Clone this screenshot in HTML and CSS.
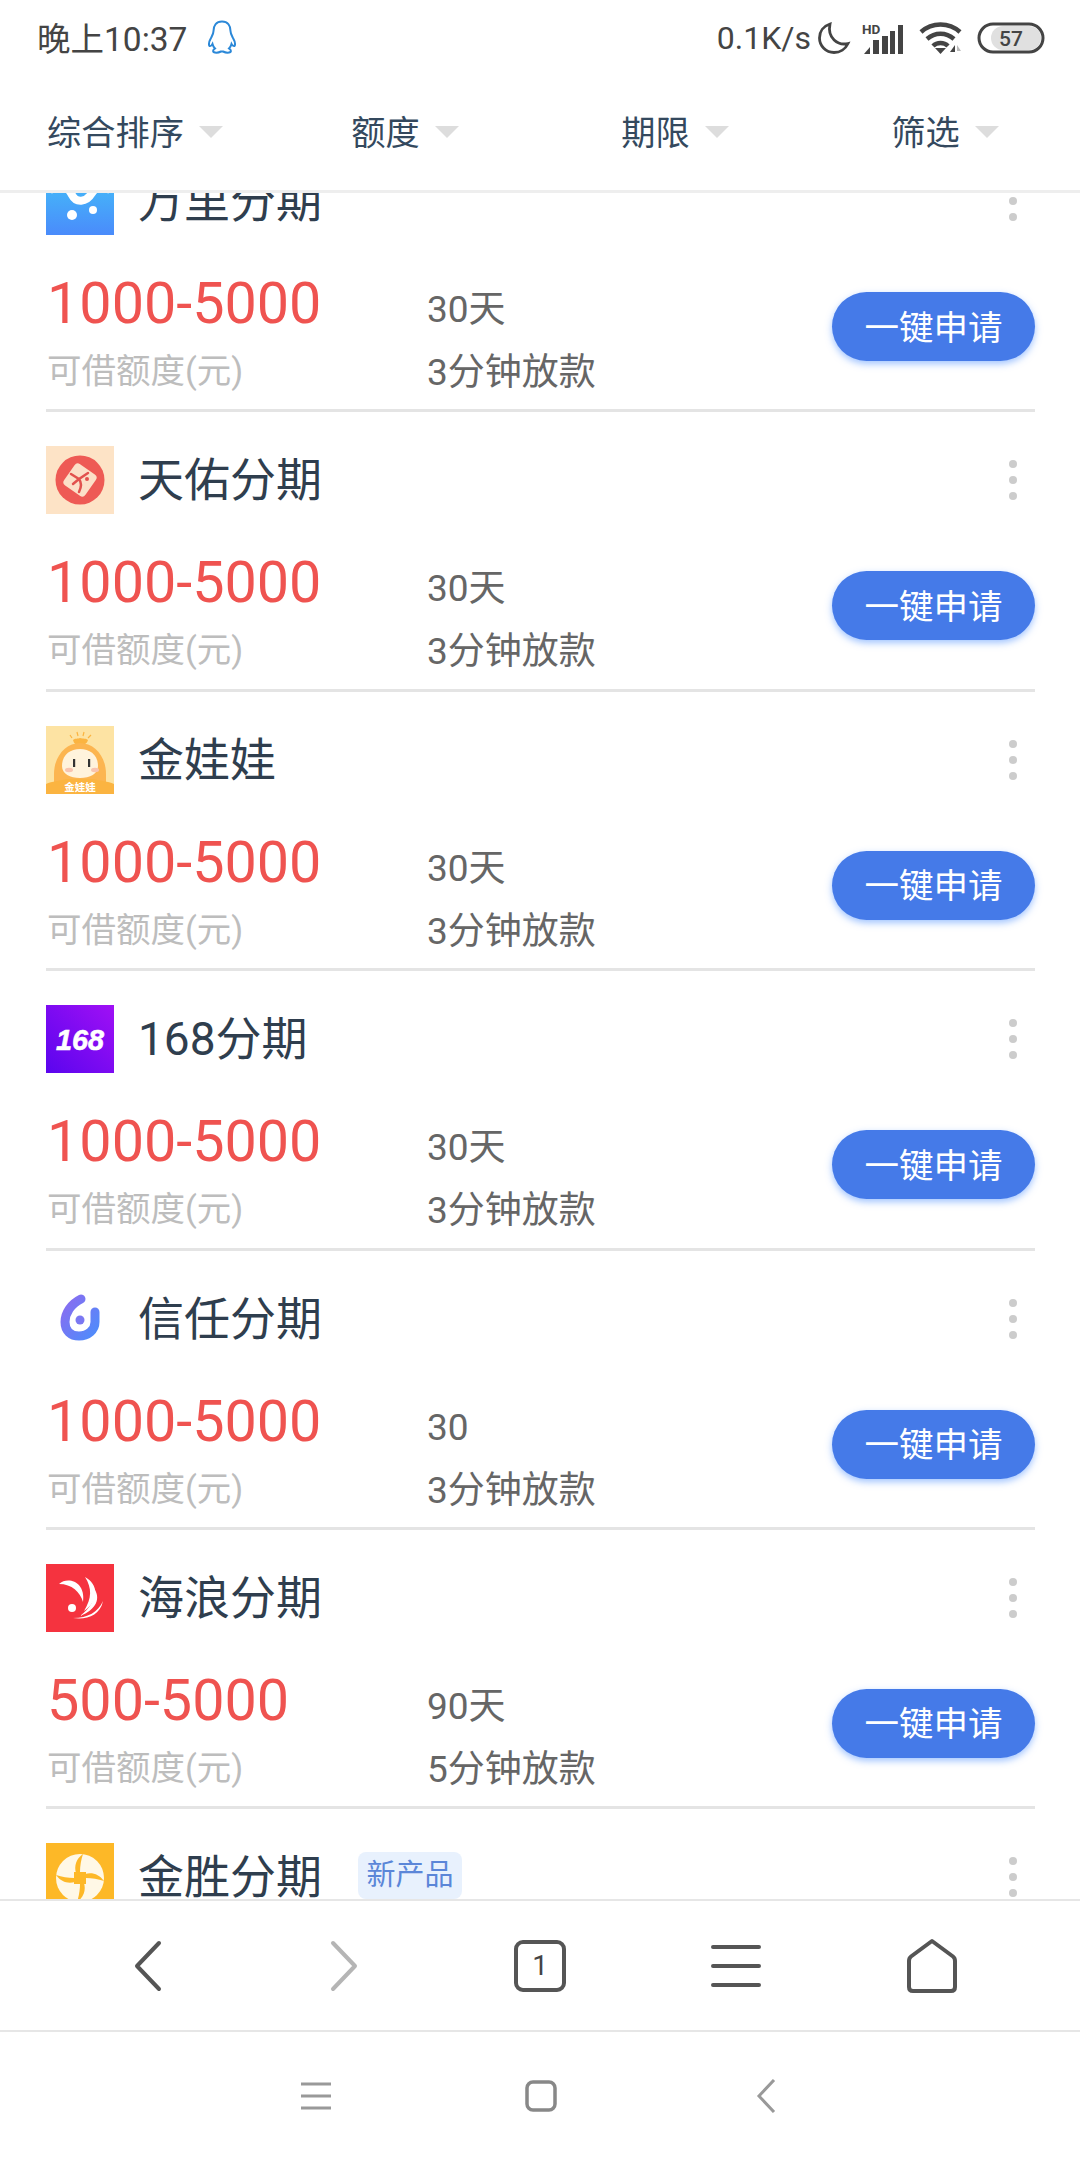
FILE: index.html
```html
<!DOCTYPE html>
<html lang="zh-CN">
<head>
  <meta charset="UTF-8" />
  <meta name="viewport" content="width=device-width, initial-scale=1.0" />
  <title>贷款列表</title>
  <link rel="stylesheet" href="styles.css">
</head>
<body>
  <div class="status">
    <div class="status-left">
      <span>晚上10:37</span>
      <svg class="qq" width="30" height="34" viewBox="0 0 30 34" fill="none" stroke="#2b88d8" stroke-width="2"><path d="M15 1.500C9 1.500 6.500 6 6.500 11C6.500 13.500 5.500 15 4 18C2 21.500 1.500 24.500 2.500 26C3.500 26.500 5 25 5.500 24C6 26 7 27.500 8 28.500C6.500 29.500 5.500 30.500 6.500 32C8.500 33 12 32.500 14 31.500H16C18 32.500 21.500 33 23.500 32C24.500 30.500 23.500 29.500 22 28.500C23 27.500 24 26 24.500 24C25 25 26.500 26.500 27.500 26C28.500 24.500 28 21.500 26 18C24.500 15 23.500 13.500 23.500 11C23.500 6 21 1.500 15 1.500Z"/></svg>
    </div>
    <div class="status-right">
      <span class="speed">0.1K/s</span>
      <svg class="moon" width="34" height="34" viewBox="0 0 34 34" fill="none" stroke="#444" stroke-width="2.800"><path d="M13 3C6.500 5 2.500 10.500 2.500 17C2.500 25 9 31.500 17 31.500C23 31.500 28.500 28 31 22.500C21 25 10 17 13 3Z"/></svg>
      <svg class="signal" width="42" height="34" viewBox="0 0 42 34">
        <text x="0" y="13" class="hd">HD</text>
        <path d="M2 33L8 26V33Z" fill="#444"/>
        <rect x="11" y="19" width="6" height="14" fill="#444"/>
        <rect x="20" y="15" width="6" height="18" fill="#444"/>
        <rect x="28" y="10" width="5" height="23" fill="#444"/>
        <rect x="36" y="4" width="5" height="29" fill="#444"/>
      </svg>
      <svg class="wifi" width="44" height="34" viewBox="0 0 44 34" fill="none" stroke="#444" stroke-width="4.500">
        <path d="M2 11C13 1 30 1 41 11"/>
        <path d="M8 18C16 11 27 11 35 18"/>
        <path d="M14 25C18 21 25 21 29 25"/>
        <path d="M16 27L21.500 33L27 27Z" fill="#444" stroke="none"/>
        <path d="M36 24V31H31Z" fill="#444" stroke="none"/>
        <path d="M38 24L42 30H38Z" fill="#bbb" stroke="none"/>
      </svg>
      <svg class="battery" width="68" height="32" viewBox="0 0 68 32">
        <rect x="14" y="4" width="50" height="24" rx="12" fill="#e0e0e0"/>
        <rect x="2" y="2" width="64" height="28" rx="14" fill="none" stroke="#444" stroke-width="3"/>
        <text x="34" y="24" text-anchor="middle" class="batt-num">57</text>
      </svg>
    </div>
  </div>

  <div class="filters">
    <div class="filter"><span>综合排序</span><i class="arrow"></i></div>
    <div class="filter"><span>额度</span><i class="arrow"></i></div>
    <div class="filter"><span>期限</span><i class="arrow"></i></div>
    <div class="filter"><span>筛选</span><i class="arrow"></i></div>
  </div>

  <div class="content">
    <div class="list">

      <div class="card">
        <div class="card-head">
          <svg class="logo" viewBox="0 0 68 68">
            <defs><linearGradient id="wl" x1="0" y1="0" x2="0" y2="1"><stop offset="0" stop-color="#43c6f8"/><stop offset="1" stop-color="#4a8bfb"/></linearGradient></defs>
            <rect width="68" height="68" fill="url(#wl)"/>
            <path d="M6 22C14 14 22 20 26 28C30 36 40 36 46 26C50 20 56 18 62 22" fill="none" stroke="#fff" stroke-width="8" stroke-linecap="round"/>
            <circle cx="26" cy="48" r="5" fill="#fff"/>
            <circle cx="47" cy="43" r="4" fill="#fff"/>
          </svg>
          <span class="name">万里分期</span>
          <div class="more"><b></b><b></b><b></b></div>
        </div>
        <div class="card-body">
          <div class="amount-box"><div class="amount">1000-5000</div><div class="hint">可借额度(元)</div></div>
          <div class="terms"><div class="term">30天</div><div class="term">3分钟放款</div></div>
          <button class="apply">一键申请</button>
        </div>
      </div>

      <div class="card">
        <div class="card-head">
          <svg class="logo" viewBox="0 0 68 68">
            <rect width="68" height="68" fill="#fde3c6"/>
            <circle cx="34" cy="34" r="24.500" fill="#ee5a55"/>
            <rect x="21" y="21" width="26" height="26" rx="4" fill="#fce0c8" transform="rotate(35 34 34)"/>
            <path d="M25 28L33 33L42 27M33 33C36 37 35 42 33 46M33 33L27 38" fill="none" stroke="#e2524e" stroke-width="2.500" stroke-linecap="round"/>
            <circle cx="41" cy="33" r="2" fill="#e2524e"/>
          </svg>
          <span class="name">天佑分期</span>
          <div class="more"><b></b><b></b><b></b></div>
        </div>
        <div class="card-body">
          <div class="amount-box"><div class="amount">1000-5000</div><div class="hint">可借额度(元)</div></div>
          <div class="terms"><div class="term">30天</div><div class="term">3分钟放款</div></div>
          <button class="apply">一键申请</button>
        </div>
      </div>

      <div class="card">
        <div class="card-head">
          <svg class="logo" viewBox="0 0 68 68">
            <rect width="68" height="68" fill="#fde3a3"/>
            <path d="M24 9L26 12M31 6L32 10M38 6L37 10M45 9L42 12" stroke="#fbb441" stroke-width="1.200" fill="none"/>
            <path d="M27 14C29 12 32 13 34 12C37 13 40 12 42 14C41 18 38 19 34 19C30 19 28 18 27 14Z" fill="#fbb441"/>
            <path d="M8 68V48C8 30 20 17 34 17C48 17 60 30 60 48V68Z" fill="#fcb550"/>
            <path d="M16 40C16 29 24 23 34 23C44 23 52 29 52 40C52 48 44 52 34 52C24 52 16 48 16 40Z" fill="#fff3dc"/>
            <rect x="27" y="33" width="2.200" height="8" fill="#333"/>
            <rect x="42" y="33" width="2.200" height="8" fill="#333"/>
            <ellipse cx="23" cy="44" rx="4" ry="2.200" fill="#f9c4b0"/>
            <ellipse cx="49" cy="44" rx="4" ry="2.200" fill="#f9c4b0"/>
            <path d="M0 68V58C6 55 14 55 20 53H48C54 55 62 55 68 58V68Z" fill="#fbb441"/>
            <text x="34" y="65" text-anchor="middle" class="logo-label">金娃娃</text>
          </svg>
          <span class="name">金娃娃</span>
          <div class="more"><b></b><b></b><b></b></div>
        </div>
        <div class="card-body">
          <div class="amount-box"><div class="amount">1000-5000</div><div class="hint">可借额度(元)</div></div>
          <div class="terms"><div class="term">30天</div><div class="term">3分钟放款</div></div>
          <button class="apply">一键申请</button>
        </div>
      </div>

      <div class="card">
        <div class="card-head">
          <svg class="logo" viewBox="0 0 68 68">
            <defs><linearGradient id="yl" x1="0" y1="1" x2="1" y2="0"><stop offset="0" stop-color="#5a05ee"/><stop offset="1" stop-color="#a010f5"/></linearGradient></defs>
            <rect width="68" height="68" fill="url(#yl)"/>
            <text x="34" y="45" text-anchor="middle" textLength="48" lengthAdjust="spacingAndGlyphs" class="logo-168">168</text>
          </svg>
          <span class="name">168分期</span>
          <div class="more"><b></b><b></b><b></b></div>
        </div>
        <div class="card-body">
          <div class="amount-box"><div class="amount">1000-5000</div><div class="hint">可借额度(元)</div></div>
          <div class="terms"><div class="term">30天</div><div class="term">3分钟放款</div></div>
          <button class="apply">一键申请</button>
        </div>
      </div>

      <div class="card">
        <div class="card-head">
          <svg class="logo" viewBox="0 0 68 68">
            <defs><linearGradient id="xr" x1="0" y1="0" x2="1" y2="1"><stop offset="0" stop-color="#8a6cf0"/><stop offset="1" stop-color="#4f8cfb"/></linearGradient></defs>
            <path d="M35 14C25 19 19 28 19 37C19 46 25 51 33 51C42 51 49 45 49 37V27" fill="none" stroke="url(#xr)" stroke-width="9" stroke-linecap="round"/>
            <circle cx="34" cy="35" r="4.500" fill="#7b78f2"/>
          </svg>
          <span class="name">信任分期</span>
          <div class="more"><b></b><b></b><b></b></div>
        </div>
        <div class="card-body">
          <div class="amount-box"><div class="amount">1000-5000</div><div class="hint">可借额度(元)</div></div>
          <div class="terms"><div class="term">30</div><div class="term">3分钟放款</div></div>
          <button class="apply">一键申请</button>
        </div>
      </div>

      <div class="card">
        <div class="card-head">
          <svg class="logo" viewBox="0 0 68 68">
            <rect width="68" height="68" fill="#f5333f"/>
            <circle cx="26" cy="44" r="4" fill="#fff"/>
            <path d="M13 20C22 12 40 18 37 38C34 28 26 20 13 20Z" fill="#fff"/>
            <path d="M39 13C52 20 54 36 38 47C46 34 46 24 39 13Z" fill="#fff"/>
            <path d="M47 23C56 34 50 46 34 52C44 44 50 36 47 23Z" fill="#fff"/>
            <path d="M57 37C52 48 42 54 27 54C40 56 54 52 57 37Z" fill="#fff"/>
          </svg>
          <span class="name">海浪分期</span>
          <div class="more"><b></b><b></b><b></b></div>
        </div>
        <div class="card-body">
          <div class="amount-box"><div class="amount">500-5000</div><div class="hint">可借额度(元)</div></div>
          <div class="terms"><div class="term">90天</div><div class="term">5分钟放款</div></div>
          <button class="apply">一键申请</button>
        </div>
      </div>

      <div class="card">
        <div class="card-head">
          <svg class="logo" viewBox="0 0 68 68">
            <rect width="68" height="68" fill="#fdb827"/>
            <circle cx="34" cy="35" r="24" fill="#fff8e6"/>
            <rect x="28" y="29" width="12" height="12" fill="#fdb827"/>
            <g fill="#fdb827">
              <path d="M30 30C28 23 30 16 37 11C35 17 34 23 34 29Z"/>
              <path d="M30 30C28 23 30 16 37 11C35 17 34 23 34 29Z" transform="rotate(90 34 35)"/>
              <path d="M30 30C28 23 30 16 37 11C35 17 34 23 34 29Z" transform="rotate(180 34 35)"/>
              <path d="M30 30C28 23 30 16 37 11C35 17 34 23 34 29Z" transform="rotate(270 34 35)"/>
            </g>
          </svg>
          <span class="name">金胜分期</span>
          <span class="tag">新产品</span>
          <div class="more"><b></b><b></b><b></b></div>
        </div>
      </div>

    </div>
  </div>

  <div class="browser-bar">
    <svg class="tool" width="52" height="52" viewBox="0 0 52 52" fill="none" stroke="#555" stroke-width="4" stroke-linecap="round" stroke-linejoin="round"><path d="M37 3L15 26L37 49"/></svg>
    <svg class="tool" width="52" height="52" viewBox="0 0 52 52" fill="none" stroke="#b5b5b5" stroke-width="4" stroke-linecap="round" stroke-linejoin="round"><path d="M15 3L37 26L15 49"/></svg>
    <div class="tabs">1</div>
    <svg class="tool" width="52" height="52" viewBox="0 0 52 52" fill="none" stroke="#555" stroke-width="4" stroke-linecap="round"><path d="M3 7H49M3 26H49M3 45H49"/></svg>
    <svg class="tool" width="52" height="56" viewBox="0 0 52 56" fill="none" stroke="#555" stroke-width="4" stroke-linejoin="round"><path d="M26 3L47 18.500Q49 20 49 23V49Q49 53 45 53H7Q3 53 3 49V23Q3 20 5 18.500Z"/></svg>
  </div>

  <div class="system-bar">
    <svg width="32" height="30" viewBox="0 0 32 30" fill="none" stroke="#999" stroke-width="3"><path d="M1 3H31M1 15H31M1 27H31"/></svg>
    <svg width="32" height="32" viewBox="0 0 32 32" fill="none" stroke="#888" stroke-width="3.500"><rect x="2" y="2" width="28" height="28" rx="6"/></svg>
    <svg width="20" height="34" viewBox="0 0 20 34" fill="none" stroke="#999" stroke-width="3"><path d="M18 1L3 17L18 33"/></svg>
  </div>
</body>
</html>
```

FILE: styles.css
```css
* {
  box-sizing: border-box;
}
html, body {
  margin: 0;
  padding: 0;
}
body {
  width: 1080px;
  height: 2160px;
  display: flex;
  flex-direction: column;
  overflow: hidden;
  background: #fff;
  font-family: Roboto, "Noto Sans CJK SC", sans-serif;
}

/* status bar */
.status {
  height: 70px;
  padding: 6px 35px 0 37px;
  display: flex;
  justify-content: space-between;
  align-items: center;
  font-size: 33.5px;
  color: #444;
  flex-shrink: 0;
}
.status-left, .status-right {
  display: flex;
  align-items: center;
}
.status-left {
  padding-bottom: 3px;
}
.qq {
  margin-left: 20px;
}
.speed {
  font-size: 32px;
}
.moon {
  margin-left: 6px;
}
.signal {
  margin-left: 11px;
}
.wifi {
  margin-left: 15px;
}
.battery {
  margin-left: 14px;
}
.hd {
  font: bold 13.5px Roboto, sans-serif;
  fill: #444;
}
.batt-num {
  font: 500 21px Roboto, sans-serif;
  fill: #444;
}

/* filter row */
.filters {
  height: 123px;
  display: grid;
  grid-template-columns: repeat(4, 1fr);
  border-bottom: 3px solid #eee;
  flex-shrink: 0;
  background: #fff;
}
.filter {
  display: flex;
  justify-content: center;
  align-items: center;
  gap: 15px;
  font-size: 34.2px;
  color: #34495e;
}
.arrow {
  width: 0;
  height: 0;
  border-left: 12px solid transparent;
  border-right: 12px solid transparent;
  border-top: 12px solid #ddd;
  margin-top: 4px;
}

/* list */
.content {
  flex: 1;
  overflow: hidden;
}
.list {
  margin-top: -60px;
}
.card {
  height: 279.4px;
  margin: 0 45px 0 46px;
  border-bottom: 3px solid #e4e4e4;
}
.card-head {
  height: 140px;
  padding-top: 34px;
  display: flex;
  align-items: flex-start;
}
.logo {
  width: 68px;
  height: 68px;
  flex-shrink: 0;
  display: block;
}
.name {
  margin-left: 24px;
  font-size: 46px;
  line-height: 68px;
  color: #2f3e4e;
}
.tag {
  margin: 9px 0 0 36px;
  width: 104px;
  height: 47px;
  line-height: 47px;
  text-align: center;
  font-size: 29px;
  color: #5b86d8;
  background: #e8f1fd;
  border-radius: 8px;
}
.more {
  margin: 14px 18px 0 auto;
  display: flex;
  flex-direction: column;
  gap: 8px;
}
.more b {
  display: block;
  width: 8px;
  height: 8px;
  border-radius: 50%;
  background: #ccc;
}
.card-body {
  display: flex;
  align-items: flex-start;
}
.amount-box {
  width: 381px;
  padding-left: 1px;
}
.amount {
  font-size: 57.5px;
  line-height: 62px;
  color: #ef5350;
}
.hint {
  margin-top: 14px;
  font-size: 34.5px;
  line-height: 44px;
  color: #bdbdbd;
}
.terms {
  padding-top: 15px;
}
.term {
  font-size: 37px;
  line-height: 44px;
  color: #666;
}
.term + .term {
  margin-top: 19px;
}
.apply {
  margin: 19px 0 0 auto;
  width: 203px;
  height: 69px;
  border: none;
  border-radius: 35px;
  background: #457ae8;
  color: #fff;
  font-family: inherit;
  font-size: 34.5px;
  padding: 0 0 4px;
  box-shadow: 0 3px 7px rgba(70, 140, 255, 0.5);
}

/* browser toolbar */
.browser-bar {
  height: 131px;
  padding: 0 50px;
  display: grid;
  grid-template-columns: repeat(5, 1fr);
  justify-items: center;
  align-items: center;
  border-top: 2px solid #e6e6e6;
  background: #fff;
  flex-shrink: 0;
}
.tabs {
  width: 52px;
  height: 52px;
  border: 4px solid #555;
  border-radius: 9px;
  display: flex;
  justify-content: center;
  align-items: center;
  font-size: 28px;
  color: #444;
}

/* android nav */
.system-bar {
  height: 130px;
  padding-left: 2px;
  display: grid;
  grid-template-columns: repeat(3, 225px);
  justify-content: center;
  justify-items: center;
  align-items: center;
  border-top: 2px solid #e6e6e6;
  flex-shrink: 0;
}
.logo-label {
  font: bold 10.5px "Noto Sans CJK SC", sans-serif;
  fill: #fff;
}
.logo-168 {
  font: italic bold 30px "Liberation Sans", sans-serif;
  fill: #fff;
  stroke: #fff;
  stroke-width: 0.6px;
}
```
